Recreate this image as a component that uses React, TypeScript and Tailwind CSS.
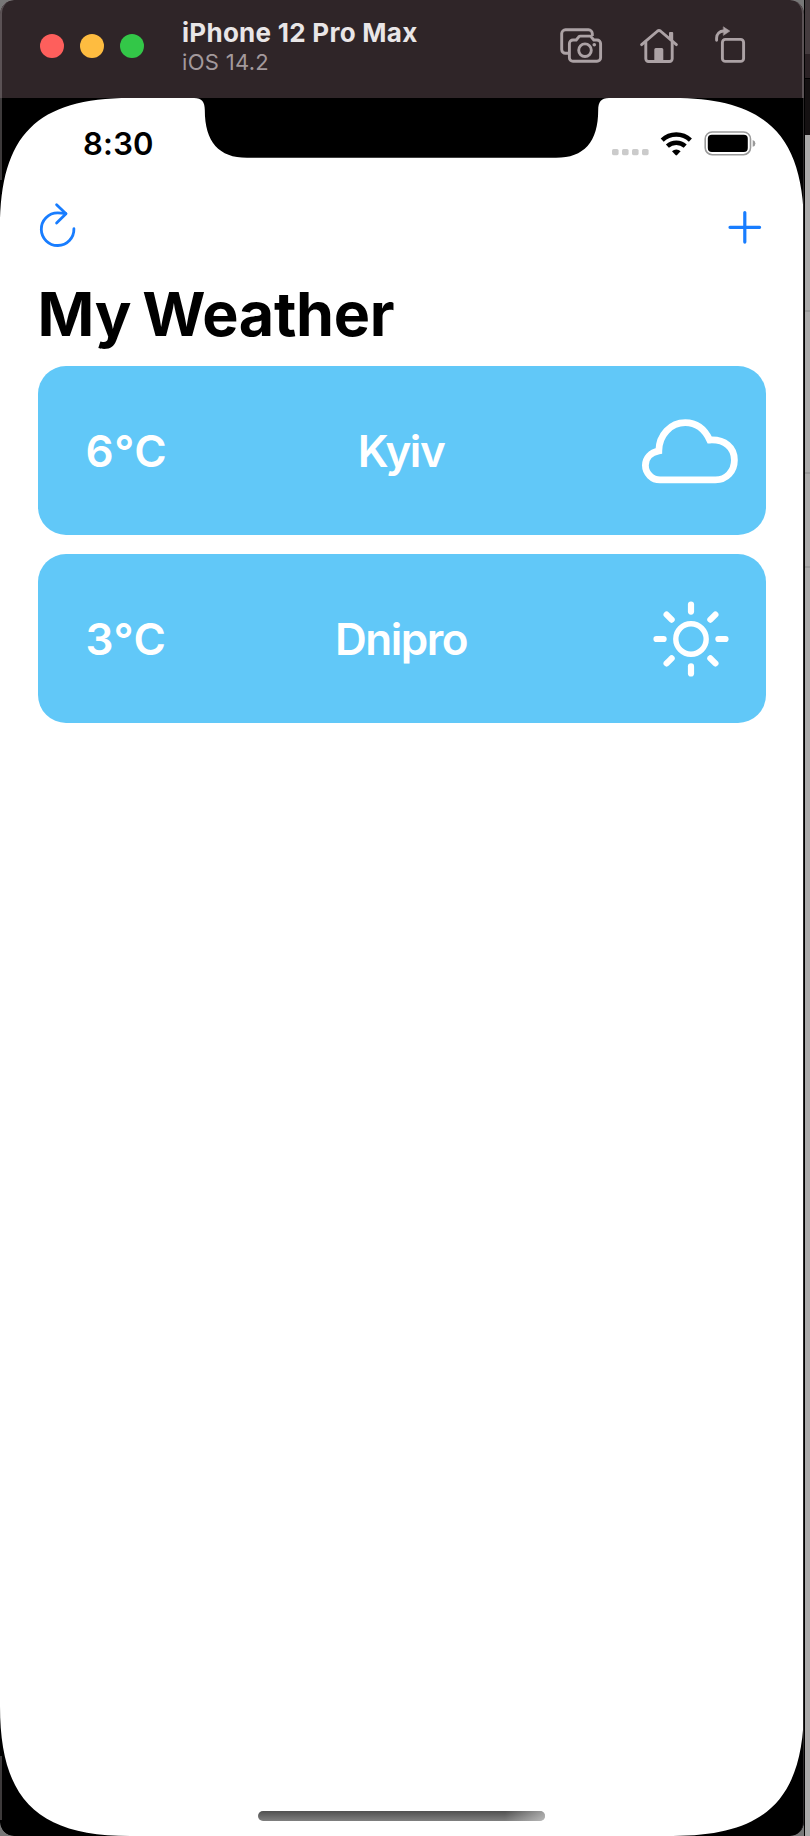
import React from "react";

function TitleBar() {
  return (
    <header className="flex h-[98px] shrink-0 items-start bg-[#2f2528] pl-[40px] pr-[56px]">
      <div className="mt-[34px] flex gap-4">
        <span className="size-6 rounded-full bg-[#fe5f5c]" />
        <span className="size-6 rounded-full bg-[#febc40]" />
        <span className="size-6 rounded-full bg-[#33c748]" />
      </div>
      <div className="ml-[38px] mt-[17px] flex flex-col">
        <h1 className="h-[31px] whitespace-nowrap text-[26px] font-bold leading-[31px] tracking-[0.27px] text-[#e9e6e7]">iPhone 12 Pro Max</h1>
        <p className="h-[28px] whitespace-nowrap text-[22px] leading-[28px] tracking-[0.3px] text-[#a3999c]">iOS 14.2</p>
      </div>
      <div className="ml-auto mt-[24px] flex gap-[34px] text-[#aca2a5]">
        <svg width="46" height="40" viewBox="558 24 46 40" fill="none" stroke="currentColor" strokeWidth="2.9" strokeLinejoin="round">
          <path d="M568 53.3h-2.5a3.8 3.8 0 0 1-3.8-3.8V33.6a3.8 3.8 0 0 1 3.8-3.8h23a3.8 3.8 0 0 1 3.8 3.8V36" />
          <path d="M573 40h3.2l2.6-3.2q.6-.7 1.6-.7h9.2q1 0 1.6.7l2.6 3.2h3.2a3.6 3.6 0 0 1 3.6 3.6v14.1a3.6 3.6 0 0 1-3.6 3.6h-24a3.6 3.6 0 0 1-3.6-3.6V43.6A3.6 3.6 0 0 1 573 40z" />
          <circle cx="585" cy="50.2" r="6.3" />
          <circle cx="594.3" cy="44.8" r="1.8" fill="currentColor" stroke="none" />
        </svg>
        <svg width="42" height="40" viewBox="638 24 42 40" fill="none" stroke="currentColor" strokeWidth="2.9" strokeLinecap="round" strokeLinejoin="round">
          <path d="m641.6 44.6 16-13.6q1.4-1.1 2.8 0l16 13.6" />
          <path d="M645.8 42v16.8a2.7 2.7 0 0 0 2.7 2.7h21a2.7 2.7 0 0 0 2.7-2.7V42" />
          <path d="M654.3 62V49.5q0-1.5 1.5-1.5h6q1.500 0 1.500 1.500V62zM669 38v-5q0-1 1-1h2.200q1 0 1 1v8z" fill="currentColor" stroke="none" />
        </svg>
        <svg width="34" height="40" viewBox="714 24 34 40" fill="none" stroke="currentColor" strokeWidth="2.9" strokeLinecap="round">
          <rect x="722.4" y="39.4" width="21.2" height="22" rx="3" />
          <path d="M716.6 40.2V38a7 7 0 0 1 7-7h1" />
          <path d="m723.6 27 6.2 4.1-6.2 4.1z" fill="currentColor" stroke="currentColor" strokeWidth=".6" />
        </svg>
      </div>
    </header>
  );
}

function StatusBar() {
  return (
    <div className="flex h-[82px] shrink-0 items-start justify-between pl-[83px] pr-[47px]">
      <time className="mt-[28px] h-9 text-[31px] font-semibold leading-9 tracking-[0.2px]">8:30</time>
      <svg className="mt-[30px]" width="146" height="32" viewBox="611 128 146 32" fill="none">
        <g fill="#cbcbcb">
          <rect x="612" y="149" width="6.6" height="6.2" rx="1.6" />
          <rect x="622" y="149" width="6.6" height="6.2" rx="1.6" />
          <rect x="632" y="149" width="6.6" height="6.2" rx="1.6" />
          <rect x="642" y="149" width="6.6" height="6.2" rx="1.6" />
        </g>
        <g stroke="#000" strokeWidth="4.4">
          <path d="M662.2 140.2a20.4 20.4 0 0 1 28.2 0" />
          <path d="M667.4 146.200a13 13 0 0 1 17.8 0" />
        </g>
        <path d="M672 151.200a6.6 6.6 0 0 1 8.6 0l-3.5 3.9q-.8.8-1.6 0z" fill="#000" />
        <rect x="705.2" y="132" width="45.3" height="22.7" rx="7" stroke="#9a9a9a" strokeWidth="1.6" />
        <rect x="707.8" y="134.7" width="40" height="17.4" rx="4" fill="#000" />
        <path d="M752.7 140q2.7.8 2.7 3.4t-2.7 3.4z" fill="#9a9a9a" />
      </svg>
    </div>
  );
}

function CloudIcon() {
  return (
    <svg width="100" height="70" viewBox="639 416 100 70" fill="none" stroke="#fff" strokeWidth="6.8">
      <path d="M659.3 479.9a14.7 14.7 0 0 1-14.9-14.6c0-7.3 5.2-12.8 13.4-14.4.2-16 11.7-28.2 26.5-28.2 10.600 0 19.200 6.200 24.400 17.300 15.500-.8 24.700 7.600 24.700 20 0 11.500-8 19.900-19 19.900z" />
    </svg>
  );
}

function SunIcon() {
  const angles = [0, 45, 90, 135, 180, 225, 270, 315];
  return (
    <svg className="mr-[9px]" width="80" height="80" viewBox="-40 -40 80 80" fill="none" stroke="#fff" strokeLinecap="round">
      <circle r="15.2" strokeWidth="5.400" />
      {angles.map((a) => (
        <path key={a} d="M27.400 0H34.500" strokeWidth="6.200" transform={`rotate(${a})`} />
      ))}
    </svg>
  );
}

function WeatherCard({ temp, city, icon }: { temp: string; city: string; icon: React.ReactNode }) {
  return (
    <li className="grid h-[169px] grid-cols-3 items-center rounded-[28px] bg-[#61c8f8] pl-[48px] pr-[26px] text-[44px] font-semibold leading-[54px] text-white">
      <span className="pt-px tracking-[0.500px]">{temp}</span>
      <span className="-ml-[23px] pt-px text-center tracking-[-1.500px]">{city}</span>
      <span className="flex justify-end">{icon}</span>
    </li>
  );
}

function BezelMask() {
  return (
    <svg className="pointer-events-none absolute left-0 top-[98px]" width="804" height="1738" viewBox="0 98 804 1738">
      <path d="M0 98H130C37 98 0 135 0 228zM804 98H673C766 98 804 135 804 228zM0 1836H130C37 1836 0 1799 0 1706zM804 1836H673C766 1836 804 1799 804 1706z" />
      <path d="M194 98C202 98 204.800 102 204.800 110C204.800 142 219 157.800 247 157.800H556C584 157.800 598.200 142 598.200 110C598.200 102 601 98 609 98z" />
      <path d="M1 98V180M1 1756V1820" stroke="#3d3a3b" strokeWidth="2" />
    </svg>
  );
}

function Phone() {
  return (
    <div className="relative flex h-[1836px] w-[804px] shrink-0 flex-col overflow-hidden rounded-[14px] bg-white">
      <TitleBar />
      <StatusBar />
      <nav className="flex h-[92px] shrink-0 items-start justify-between pl-[37px] pr-[39px] text-[#187dff]">
        <button aria-label="Refresh" className="mt-[22px]">
          <svg width="42" height="48" viewBox="37 202 42 48" fill="none" stroke="currentColor" strokeWidth="2.800" strokeLinecap="round" strokeLinejoin="round">
            <path d="M73.900 228.700A16.300 16.300 0 1 1 57.600 212.900q4 0 8.200.8" />
            <path d="m56.600 204.700 9.400 9-9.400 9.200" />
          </svg>
        </button>
        <button aria-label="Add" className="mt-[27px]">
          <svg width="40" height="40" viewBox="0 0 40 40" fill="none" stroke="currentColor" strokeWidth="3.200" strokeLinecap="round">
            <path d="M5 20.300h29.600M19.800 5.500v29.600" />
          </svg>
        </button>
      </nav>
      <main className="flex flex-1 flex-col px-[37.5px]">
        <h2 className="mt-[5px] h-[89px] whitespace-nowrap text-[61px] font-bold leading-[74px] tracking-[-0.300px] [word-spacing:-3px]">My Weather</h2>
        <ul className="flex w-[728px] flex-col gap-[19px]">
          <WeatherCard temp="6°C" city="Kyiv" icon={<CloudIcon />} />
          <WeatherCard temp="3°C" city="Dnipro" icon={<SunIcon />} />
        </ul>
        <div className="mb-[15px] ml-[220.5px] mt-auto h-[10px] w-[287px] overflow-hidden rounded-full bg-linear-to-b from-[#505050] to-[#808080]">
          <div className="ml-auto h-full w-[40px] bg-linear-to-r from-transparent to-white/45" />
        </div>
      </main>
      <BezelMask />
      <div className="pointer-events-none absolute inset-0 rounded-[14px] border-r border-[#2b2829]" />
      <div className="pointer-events-none absolute inset-x-0 top-0 h-[98px] rounded-t-[14px] border-x-2 border-[#5b5255]" />
    </div>
  );
}

function BackgroundWindow() {
  return (
    <aside className="flex flex-1 flex-col border-l border-black bg-[#aaa9a9]">
      <div className="h-[54px] bg-[#443b3e]" />
      <div className="h-[24px] bg-[#2b2225]" />
      <div className="h-[57px] border-t border-black bg-[#151112]" />
      <div className="h-[177px] border-b-2 border-[#999]" />
      <div className="h-[162px] border-b-2 border-[#999]" />
      <div className="h-[94px] border-b-2 border-[#999]" />
    </aside>
  );
}

export default function App() {
  return (
    <div className="flex h-[1836px] w-[810px] overflow-hidden bg-[#777] font-['Inter',sans-serif] text-black">
      <Phone />
      <BackgroundWindow />
    </div>
  );
}
